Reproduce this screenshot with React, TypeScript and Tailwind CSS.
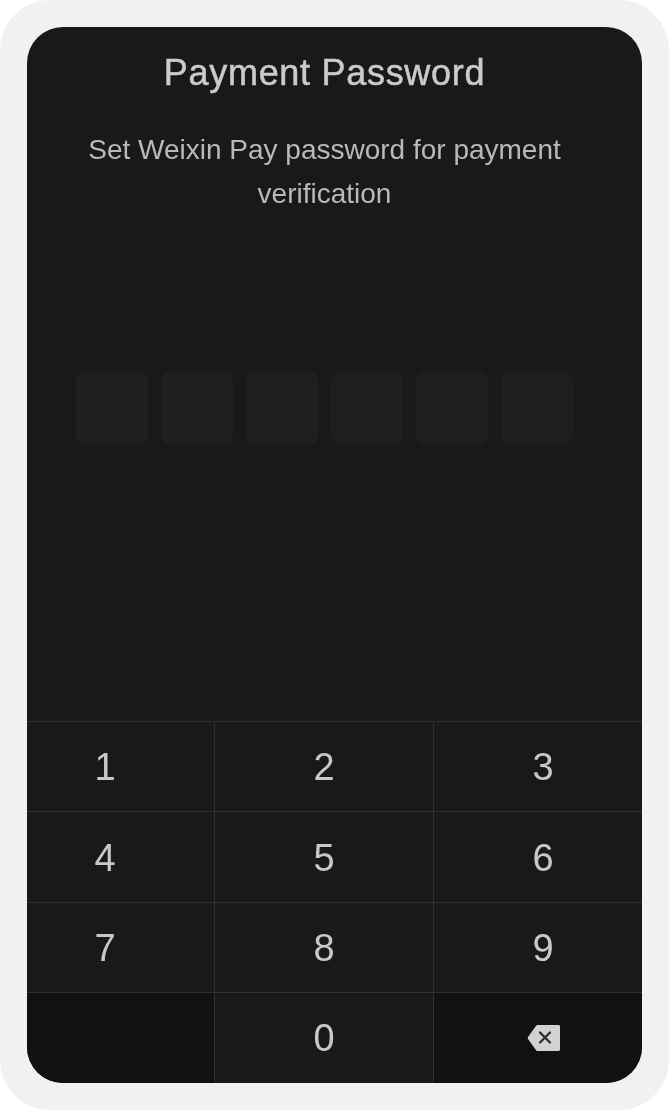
const KEYS = ["1", "2", "3", "4", "5", "6", "7", "8", "9"]

function BackspaceIcon() {
  return (
    <svg width="34" height="28" viewBox="0 0 34 28" fill="none">
      <path
        d="M10.5 1H31.5C32.3 1 33 1.7 33 2.5V25.5C33 26.3 32.3 27 31.5 27H10.5C10 27 9.6 26.8 9.3 26.4L1 15C0.6 14.4 0.6 13.6 1 13L9.3 1.6C9.6 1.2 10 1 10.5 1Z"
        fill="#d2d2d2"
      />
      <path d="M13 8.5L23 18.5M23 8.5L13 18.5" stroke="#2a2a2a" strokeWidth="2.2" strokeLinecap="round" />
    </svg>
  )
}

function Key({ label }: { label: string }) {
  return (
    <div className="flex h-[90.5px] w-[219px] items-center justify-center border-t border-r border-[#303030] pt-[2px] text-[38px] leading-none text-[#c8c8c8]">
      <span className="blur-[0.5px]">{label}</span>
    </div>
  )
}

export default function App() {
  return (
    <div className="h-[1110px] w-[669px] bg-white font-['Liberation_Sans',Arial,sans-serif]">
      <div className="h-full w-full rounded-[50px] bg-[#f1f1f1] p-[27px]">
        {/* card is narrower than its content, keypad sides get clipped */}
        <div className="h-[1056px] w-[615px] overflow-hidden rounded-[36px] bg-[#191919]">
          <div className="-ml-[31px] flex h-full w-[657px] flex-col">
            <h1 className="mt-[24px] text-center text-[36px] leading-[44px] font-normal tracking-[0.7px] text-[#cbcbcb] blur-[0.5px] [-webkit-text-stroke:0.5px_#cbcbcb]">
              Payment Password
            </h1>
            <p className="mx-auto mt-[33px] w-[500px] text-center text-[28px] leading-[44px] text-[#b9b9b9] blur-[0.5px]">
              Set Weixin Pay password for payment verification
            </p>

            <div className="mt-[156px] flex justify-center gap-[13px]">
              {[0, 1, 2, 3, 4, 5].map((i) => (
                <div key={i} className="h-[72px] w-[72px] rounded-[8px] bg-[#1f1f1f]" />
              ))}
            </div>

            {/* keypad */}
            <div className="mt-auto grid grid-cols-3">
              {KEYS.map((k) => (
                <Key key={k} label={k} />
              ))}
              <div className="h-[91px] border-t border-r border-[#303030] bg-[#111111]" />
              <div className="flex h-[91px] items-center justify-center border-t border-r border-[#303030] text-[38px] leading-none text-[#c8c8c8]">
                <span className="blur-[0.5px]">0</span>
              </div>
              <div className="flex h-[91px] items-center justify-center border-t border-[#303030] bg-[#111111]">
                <BackspaceIcon />
              </div>
            </div>
          </div>
        </div>
      </div>
    </div>
  )
}
